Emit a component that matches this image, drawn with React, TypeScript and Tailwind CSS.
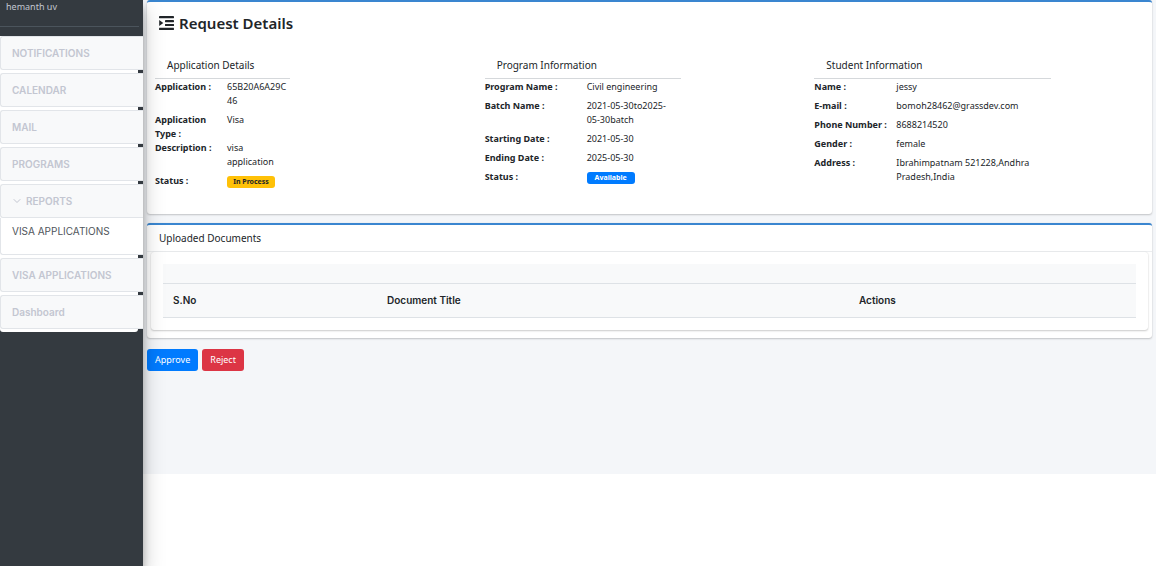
import { useState } from 'react'
import type { ReactNode } from 'react'
import { LuChevronDown } from 'react-icons/lu'

type Row = { label: string; value: ReactNode }

const applicationRows: Row[] = [
  { label: 'Application :', value: '65B20A6A29C46' },
  { label: 'Application Type :', value: 'Visa' },
  { label: 'Description :', value: 'visa application' },
  { label: 'Status :', value: <Badge className="bg-[#ffc107] text-[#212529]">In Process</Badge> },
]

const programRows: Row[] = [
  { label: 'Program Name :', value: 'Civil engineering' },
  { label: 'Batch Name :', value: '2021-05-30to2025-05-30batch' },
  { label: 'Starting Date :', value: '2021-05-30' },
  { label: 'Ending Date :', value: '2025-05-30' },
  { label: 'Status :', value: <Badge className="bg-[#007bff] text-white">Available</Badge> },
]

const studentRows: Row[] = [
  { label: 'Name :', value: 'jessy' },
  { label: 'E-mail :', value: 'bomoh28462@grassdev.com' },
  { label: 'Phone Number :', value: '8688214520' },
  { label: 'Gender :', value: 'female' },
  { label: 'Address :', value: 'Ibrahimpatnam 521228,Andhra Pradesh,India' },
]

function IndentIcon() {
  return (
    <svg viewBox="0 0 15 14" className="w-[15px] h-3.5" fill="currentColor" aria-hidden="true">
      <rect x="0" y="0" width="15" height="2.2" rx="0.4" />
      <rect x="6" y="4" width="9" height="2.2" rx="0.4" />
      <rect x="6" y="7.9" width="9" height="2.2" rx="0.4" />
      <rect x="0" y="11.8" width="15" height="2.2" rx="0.4" />
      <path d="M0.2 3.9 L4.3 7 L0.2 10.1 Z" />
    </svg>
  )
}

function Badge({ className, children }: { className: string; children: ReactNode }) {
  return (
    <span className={`block mt-0.5 w-12 h-3 rounded-[3px] text-center text-[7px] leading-3 font-bold ${className}`}>
      {children}
    </span>
  )
}

function Details({ title, rows, width, columns }: { title: string; rows: Row[]; width: string; columns: string }) {
  return (
    <section>
      <div className={width}>
        <h2 className="pl-3 pb-1 text-[10px] leading-[18px] border-b border-[#d5d8db]">{title}</h2>
        <dl className={`grid ${columns} pt-px text-[9px] leading-[14px]`}>
          {rows.map((r) => (
            <div key={r.label} className="contents">
              <dt className="font-bold">{r.label}</dt>
              <dd className="wrap-anywhere self-start pb-[5px]">{r.value}</dd>
            </div>
          ))}
        </dl>
      </div>
    </section>
  )
}

const navItem =
  'flex items-center w-full h-[34px] pl-[11px] rounded-l-[3px] border border-r-0 border-[#e2e5e9] bg-[#f8f9fa] text-[10px] font-semibold text-[#c3c6d1]'

function Sidebar() {
  const [open, setOpen] = useState(true)

  return (
    <aside className="relative z-10 w-[143px] shrink-0 bg-[#343a40] shadow-[0_10px_20px_rgba(0,0,0,0.25),0_7px_7px_rgba(0,0,0,0.22)]">
      <div className="mr-1 h-[27px] pl-1.5 border-b border-[#4b545c] text-[9px] leading-[14px] text-[#c2c7d0]">
        hemanth uv
      </div>
      <nav className="mt-[9px] w-[138px] bg-white rounded-b-[3px] pb-[3px] font-['Inter',sans-serif]">
        {/* entries run past the white panel to the sidebar edge */}
        <div className="w-[143px] flex flex-col gap-[3px]">
          <a href="#notifications" className={navItem}>NOTIFICATIONS</a>
          <a href="#calendar" className={navItem}>CALENDAR</a>
          <a href="#mail" className={navItem}>MAIL</a>
          <a href="#programs" className={navItem}>PROGRAMS</a>
          <div>
            <button type="button" className={navItem} aria-expanded={open} onClick={() => setOpen(!open)}>
              <LuChevronDown className="w-3 h-3 -ml-px mr-[3px]" />
              REPORTS
            </button>
            {open && (
              <div className="h-[37px] pt-[5px] pl-[11px] border-l border-b border-[#e2e5e9] rounded-bl-[3px] bg-white">
                <a href="#visa" className="block text-[10px] leading-4 text-[#50555b]">VISA APPLICATIONS</a>
              </div>
            )}
          </div>
          <a href="#visa-applications" className={navItem}>VISA APPLICATIONS</a>
          <a href="#dashboard" className={navItem}>Dashboard</a>
        </div>
      </nav>
    </aside>
  )
}

const card = 'rounded-[3px] border-t-2 border-[#3a86d0] bg-white shadow-[0_0_1px_rgba(0,0,0,0.13),0_1px_2px_rgba(0,0,0,0.2)]'

export default function App() {
  return (
    <div className="flex min-h-screen bg-white font-['Noto_Sans',sans-serif] text-[#212529]">
      <Sidebar />
      <main className="flex-1 min-w-0 self-start mr-0.5 px-1 pb-[103px] bg-[#f4f6f9]">
        <div className={`${card} px-2 pb-[21px]`}>
          <h1 className="flex items-center gap-[5px] h-[42px] pl-1 text-[15px] font-semibold">
            <IndentIcon />
            Request Details
          </h1>
          <div className="mt-3 grid grid-cols-3">
            <Details title="Application Details" rows={applicationRows} width="w-[135px]" columns="grid-cols-[72px_1fr]" />
            <Details title="Program Information" rows={programRows} width="w-[196px]" columns="grid-cols-[102px_86px]" />
            <Details title="Student Information" rows={studentRows} width="w-[237px]" columns="grid-cols-[82px_1fr]" />
          </div>
        </div>

        <div className={`${card} mt-[9px] pb-2`}>
          <h2 className="pl-3 text-[10px] leading-[26px] border-b border-[#eceef0]">Uploaded Documents</h2>
          <div className="mx-1 px-3 pt-3 pb-3 rounded-[3px] shadow-[0_0_1px_rgba(0,0,0,0.13),0_1px_2px_rgba(0,0,0,0.2)]">
            <table className="w-full table-fixed bg-[#f8f9fa] font-['Inter',sans-serif] text-[10px] text-left">
              <colgroup>
                <col className="w-[22%]" />
                <col />
                <col className="w-[29.5%]" />
              </colgroup>
              <thead>
                <tr className="h-[19px] border-b border-[#dee2e6]">
                  <td colSpan={3} />
                </tr>
                <tr className="h-[34px] border-b border-[#dee2e6]">
                  <th className="px-2.5 font-semibold">S.No</th>
                  <th className="px-2.5 font-semibold">Document Title</th>
                  <th className="px-2.5 font-semibold">Actions</th>
                </tr>
              </thead>
            </table>
          </div>
        </div>

        <div className="mt-[11px] flex gap-1 text-[9px] text-white">
          <button type="button" className="h-[22px] px-2 rounded-[3px] bg-[#007bff]">Approve</button>
          <button type="button" className="h-[22px] px-2 rounded-[3px] bg-[#dc3545]">Reject</button>
        </div>
      </main>
    </div>
  )
}
